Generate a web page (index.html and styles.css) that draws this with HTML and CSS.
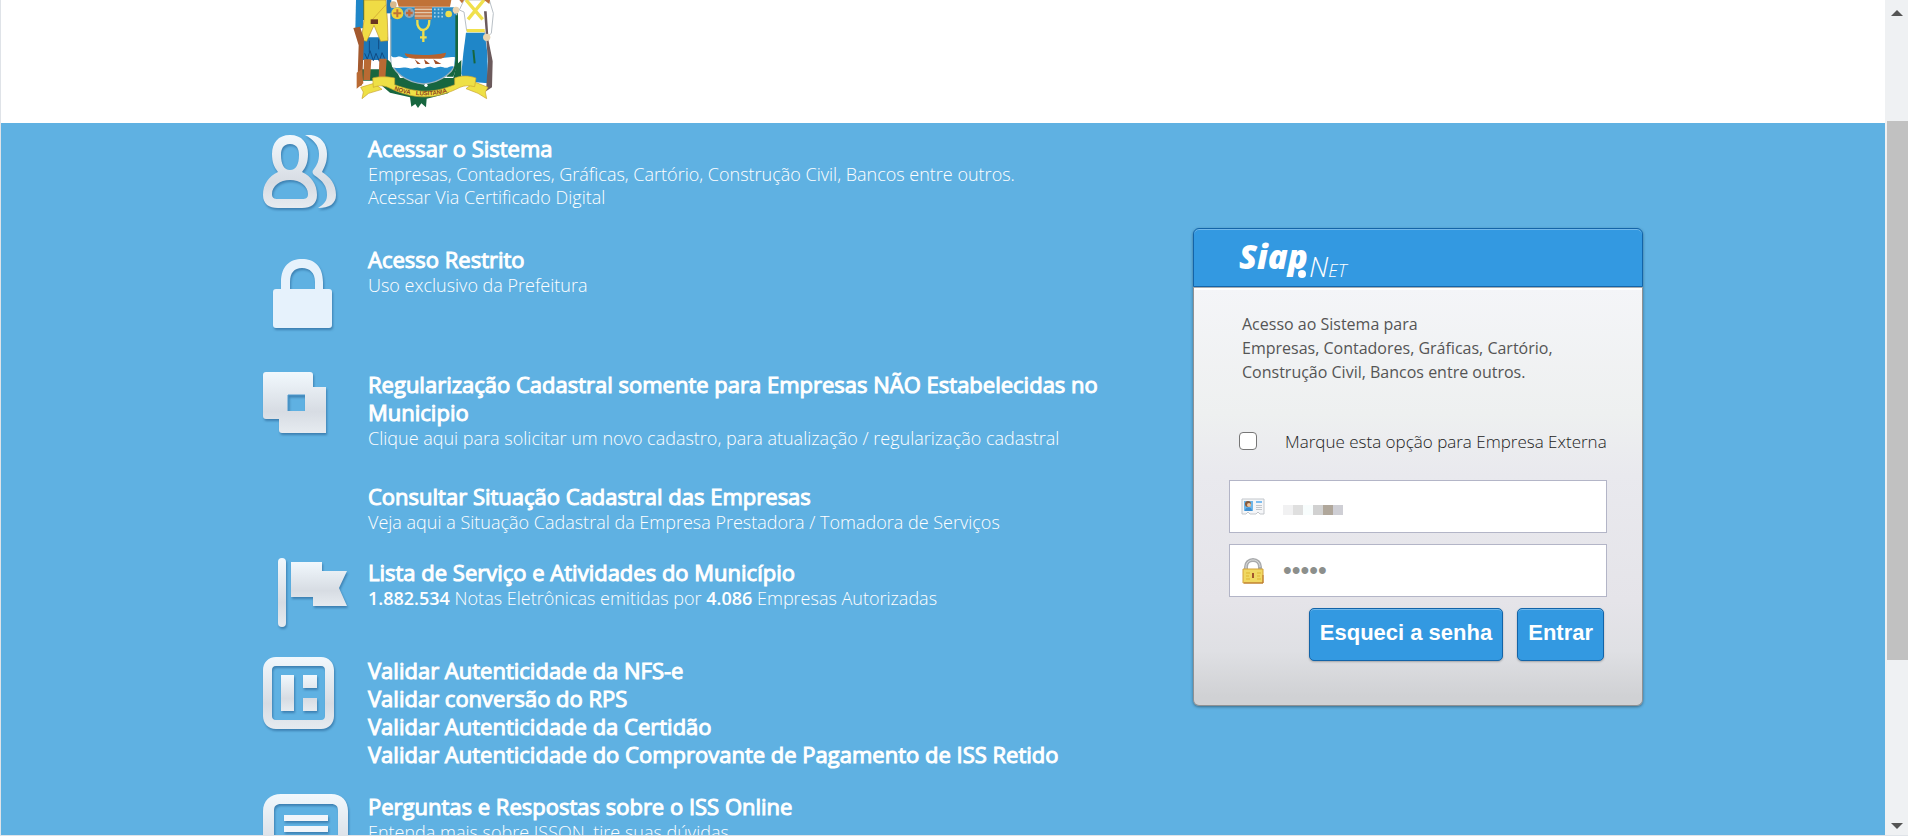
FILE: index.html
```html
<!DOCTYPE html>
<html lang="pt-br">
<head>
    <meta charset="UTF-8">
    <title>SiapNet - ISS Online</title>
    <link rel="stylesheet" href="styles.css">
</head>
<body>
    <div class="frame">
        <div class="page">
            <header class="topo">
                <div class="container">
                    <svg class="brasao" viewBox="0 0 600 369" role="img" aria-label="Brasão do município">
                        <!-- folhagem -->
                        <path fill="#17663f" d="M165 172l25 22 20 40h160l10-40 14-14v50l-40 50-46 12-18 4-2 26-14-12-10 14-8-12-12 8-4-28-60-14-40-34z"/>
                        <path fill="#17663f" d="M364 40h20v150l-14 40h-20zM98 0h10v60h-10zM96 208h100l10 34h-110z"/>
                        <!-- figura da esquerda -->
                        <path fill="#1f86c8" d="M78 0h22v84l-24 4z"/>
                        <path fill="#1d78b8" d="M98 112h76v68H96z"/>
                        <path stroke="#114c84" stroke-width="3" fill="none" d="M104 160l8 18 8-26 10 30 8-22 10 24 8-26 8 18M118 122v34M146 118v30"/>
                        <path fill="#f0dc45" stroke="#b98f2a" stroke-width="2" d="M102 0h66l4 60 2 62-22 2-20-48-22 48-16-4 8-60z"/>
                        <path stroke="#c99a2e" stroke-width="2" d="M168 14l-42 46"/>
                        <path fill="#6b3420" d="M122 58h22v14h-22z"/>
                        <path fill="#a3592e" d="M70 84l20-4 12 36-6 140-14 4 4-124z"/>
                        <path fill="#b96a33" d="M102 178h22l-4 62h-20zM148 176h22l-4 60h-20zM80 218l16-10 4 42-20 16z"/>
                        <path fill="#2176b4" d="M170 0h14v40h-14z"/>
                        <!-- escudo -->
                        <path fill="#258fcf" stroke="#9fb4bd" stroke-width="4" d="M182 40h198v130c0 48-50 78-99 82-49-4-99-34-99-82z"/>
                        <path fill="#17663f" d="M376 46h8v150l-20 26c8-16 12-30 12-48z"/>
                        <path fill="#fff" d="M183 168c12 10 22-4 34 4 14 8 22-6 36 2 12 4 20-6 34-2 14 8 24-4 38 0 16 6 32-4 50 0l-3 28c-12-6-18 8-32 2-14-6-22 6-34 0-14-6-22 8-36 2-14-6-20 6-34 0-14-6-32 6-50-4z"/>
                        <path fill="#b5622d" d="M224 160c36 8 88 6 124-2-2 14-10 18-20 18h-72c-18 0-30-6-32-16z"/>
                        <path fill="#a3512a" d="M254 178l18 14-10 0zM282 178l18 14-14 0zM310 178l24 14-18 0z"/>
                        <path fill="none" stroke="#eede4d" stroke-width="7" d="M262 60c-4 40 38 40 36 0M280 90v36M270 112h20"/>
                        <!-- coroa mural -->
                        <path fill="#c07238" d="M200 0h164l-4 20H206z"/>
                        <path fill="#2c8cc5" d="M182 22h190v36H182z"/>
                        <circle cx="202" cy="40" r="18" fill="#f0d23c"/>
                        <path stroke="#c07238" stroke-width="6" d="M202 28v24M190 40h24"/>
                        <circle cx="238" cy="39" r="15" fill="#93aab8"/>
                        <path stroke="#c0683a" stroke-width="7" d="M238 29v20M228 39h20"/>
                        <path fill="#c9804f" d="M254 20h52v38h-52z"/>
                        <path stroke="#e8d8c0" stroke-width="3" d="M254 28h52M254 38h52M254 48h52"/>
                        <path stroke="#a9d3ea" stroke-width="5" stroke-dasharray="5 6" d="M312 28h30M312 39h30M312 50h30"/>
                        <circle cx="356" cy="42" r="10" fill="#f0e04c"/>
                        <circle cx="190" cy="14" r="10" fill="#d9b98c"/>
                        <circle cx="378" cy="30" r="10" fill="#e8d3ae"/>
                        <!-- figura da direita -->
                        <path fill="#fff" stroke="#b9c0c6" stroke-width="3" d="M388 30l14-30h76l12 40-6 60-14 12-8-20h-52l-8-56z"/>
                        <path stroke="#f0e04c" stroke-width="10" d="M408 0l50 58M462 0l-48 58M410 92h54"/>
                        <path fill="#c07238" d="M388 0h14l-6 10zM462 0h18l-2 12z"/>
                        <path fill="#1f86c8" d="M408 98h56l8 60 2 92-72-6-8-24 6-60z"/>
                        <path stroke="#17663f" stroke-width="6" fill="none" d="M430 150l4 40"/>
                        <path fill="#6b5a5c" d="M462 34h8l6 90 12 60-2 78-18 12 6-90z"/>
                        <circle cx="470" cy="112" r="11" fill="#e8d3ae"/>
                        <!-- faixa -->
                        <path fill="#eee045" stroke="#c9a32e" stroke-width="2" d="M92 262l40-12 24 18-40 12-20 16 4-20zM474 262l-40-16-26 20 36 14 26 16-4-20z"/>
                        <path fill="#eee045" stroke="#c9a32e" stroke-width="2" d="M128 234c24-6 46-4 66 0v20c70 26 114 26 180 0v-20c22-8 42-8 64 0l-4 26c-18-4-30-4-44 2-74 38-140 38-216 0-16-6-28-6-44 0z"/>
                        <path id="curva" fill="none" d="M192 270c60 22 130 22 190-4"/>
                        <text class="lema"><textPath href="#curva">NOVA <tspan dx="12">LUSITANIA</tspan></textPath></text>
                        <circle cx="288" cy="256" r="5" fill="#fff"/>
                    </svg>
                </div>
            </header>

            <main class="conteudo">
                <div class="container colunas">
                    <svg class="defs" aria-hidden="true">
                        <defs>
                            <linearGradient id="prata" x1="0" y1="0" x2="0" y2="1">
                                <stop offset="0" stop-color="#f1f8fd"/>
                                <stop offset="0.65" stop-color="#d7dce3"/>
                                <stop offset="1" stop-color="#e6ebf0"/>
                            </linearGradient>
                        </defs>
                    </svg>

                    <div class="menu">
                        <section class="item item-acesso">
                            <div class="icone">
                                <svg width="73" height="75" viewBox="0 0 73 75">
                                    <path fill="url(#prata)" d="M42 0h6c10 1 16 9 16 19 0 8-2 12-5 18 8 5 14 12 14 23 0 9-7 13-18 13 6-4 9-7 9-13 0-9-4-14-13-20-2-2-2-4 0-6 3-4 5-8 5-15 0-9-6-15-14-19z"/>
                                    <path fill="url(#prata)" fill-rule="evenodd" d="M27 0c12 0 18 8 18 19 0 8-2 13-6 18 9 4 15 12 15 23 0 9-6 13-15 13H15C6 73 0 69 0 60c0-11 6-19 15-23-4-5-6-10-6-18C9 8 15 0 27 0zm0 9c-7 0-9 5-9 11 0 9 3 15 9 15s9-6 9-15c0-6-2-11-9-11zm0 36c-10 0-18 6-18 14 0 4 2 5 6 5h24c4 0 6-1 6-5 0-8-8-14-18-14z"/>
                                </svg>
                            </div>
                            <div class="texto">
                                <h2><a href="#">Acessar o Sistema</a></h2>
                                <p>Empresas, Contadores, Gráficas, Cartório, Construção Civil, Bancos entre outros.</p>
                                <p><a href="#">Acessar Via Certificado Digital</a></p>
                            </div>
                        </section>

                        <section class="item item-restrito">
                            <div class="icone icone-cadeado">
                                <svg width="61" height="71" viewBox="0 0 61 71">
                                    <path fill="#e6f2fc" fill-rule="evenodd" d="M9 31V24C9 8 18 1 30 1s21 7 21 23v7h6c2 0 3 1 3 3v33c0 2-1 3-3 3H4c-2 0-3-1-3-3V34c0-2 1-3 3-3zm9 0h25v-7c0-9-5-14-13-14s-12 5-12 14z"/>
                                </svg>
                            </div>
                            <div class="texto">
                                <h2><a href="#">Acesso Restrito</a></h2>
                                <p>Uso exclusivo da Prefeitura</p>
                            </div>
                        </section>

                        <section class="item item-cadastro">
                            <div class="icone">
                                <svg width="63" height="65" viewBox="0 0 63 65">
                                    <path fill="url(#prata)" fill-rule="evenodd" d="M3 1h44c2 0 3 1 3 3v12h13v46H19c-2 0-3-1-3-3V48H3c-2 0-3-1-3-3V4c0-2 1-3 3-3zm22 23v16h17V24z"/>
                                    <path fill="none" stroke="#4f9bd0" d="M25 40V24h17"/>
                                </svg>
                            </div>
                            <div class="texto">
                                <h2><a href="#">Regularização Cadastral somente para Empresas NÃO Estabelecidas no Municipio</a></h2>
                                <p>Clique aqui para solicitar um novo cadastro, para atualização / regularização cadastral</p>
                            </div>
                        </section>

                        <section class="item">
                            <div class="icone"></div>
                            <div class="texto">
                                <h2><a href="#">Consultar Situação Cadastral das Empresas</a></h2>
                                <p>Veja aqui a Situação Cadastral da Empresa Prestadora / Tomadora de Serviços</p>
                            </div>
                        </section>

                        <section class="item">
                            <div class="icone icone-bandeira">
                                <svg width="70" height="70" viewBox="0 0 70 70">
                                    <rect fill="url(#prata)" x="1" y="0" width="8" height="69" rx="4"/>
                                    <path fill="url(#prata)" d="M14 4h31v9h25l-8 17 8 18H36v-9H14z"/>
                                </svg>
                            </div>
                            <div class="texto">
                                <h2><a href="#">Lista de Serviço e Atividades do Município</a></h2>
                                <p><strong>1.882.534</strong> Notas Eletrônicas emitidas por <strong>4.086</strong> Empresas Autorizadas</p>
                            </div>
                        </section>

                        <section class="item">
                            <div class="icone">
                                <svg width="72" height="73" viewBox="0 0 72 73">
                                    <path fill="url(#prata)" fill-rule="evenodd" d="M13 0h45c8 0 13 6 13 13v46c0 7-5 13-13 13H13C5 72 0 66 0 59V13C0 6 5 0 13 0zm0 9c-3 0-4 2-4 4v46c0 2 1 4 4 4h45c3 0 4-2 4-4V13c0-2-1-4-4-4z"/>
                                    <path fill="url(#prata)" d="M18 18h13v36H18zM40 18h14v13H40zM40 41h14v13H40z"/>
                                </svg>
                            </div>
                            <div class="texto">
                                <h2><a href="#">Validar Autenticidade da NFS-e</a></h2>
                                <h2><a href="#">Validar conversão do RPS</a></h2>
                                <h2><a href="#">Validar Autenticidade da Certidão</a></h2>
                                <h2><a href="#">Validar Autenticidade do Comprovante de Pagamento de ISS Retido</a></h2>
                            </div>
                        </section>

                        <section class="item">
                            <div class="icone">
                                <svg width="86" height="86" viewBox="0 0 86 86">
                                    <path fill="url(#prata)" fill-rule="evenodd" d="M18 1h50c11 0 17 7 17 17v50c0 11-6 17-17 17H18C7 85 0 79 0 68V18C0 8 7 1 18 1zm0 10c-5 0-7 2-7 7v50c0 5 2 7 7 7h50c5 0 7-2 7-7V18c0-5-2-7-7-7z"/>
                                    <path fill="#f1f5fa" d="M21 22h44v6H21zM21 33h44v6H21zM21 44h44v6H21z"/>
                                </svg>
                            </div>
                            <div class="texto">
                                <h2><a href="#">Perguntas e Respostas sobre o ISS Online</a></h2>
                                <p>Entenda mais sobre ISSON, tire suas dúvidas</p>
                            </div>
                        </section>
                    </div>

                    <form class="login">
                        <div class="login-topo">
                            <svg width="110" height="48" viewBox="0 0 110 48" role="img" aria-label="SiapNet">
                                <text class="logo-siap" x="2" y="34">Siap</text>
                                <circle cx="65" cy="39" r="4" fill="#fff"/>
                                <text class="logo-net" x="72" y="42">N<tspan class="logo-et">ET</tspan></text>
                            </svg>
                        </div>
                        <div class="login-corpo">
                            <p class="login-texto">Acesso ao Sistema para<br>Empresas, Contadores, Gráficas, Cartório,<br>Construção Civil, Bancos entre outros.</p>

                            <div class="externa">
                                <input type="checkbox" id="externa">
                                <label for="externa">Marque esta opção para Empresa Externa</label>
                            </div>

                            <div class="campo">
                                <svg width="24" height="24" viewBox="0 0 24 24" aria-hidden="true">
                                    <path fill="#f5f6f8" stroke="#c3c7cc" d="M1 4h22v15h-4l-2-2-2 2H9l-2-2-2 2H1z"/>
                                    <path fill="#6fb7ea" d="M3 6h9v10H3z"/>
                                    <circle cx="7" cy="9" r="3" fill="#8a5a3a"/>
                                    <circle cx="8" cy="10" r="2" fill="#f1c7a0"/>
                                    <path fill="#3f8fd0" d="M4 16c0-5 7-5 7 0z"/>
                                    <path stroke="#7dbdf0" stroke-width="2" d="M15 7h6"/>
                                    <path stroke="#c3c7cc" d="M15 10.500h6M15 12.500h6M15 14.500h6"/>
                                </svg>
                                <input type="text" id="usuario" aria-label="Usuário">
                                <div class="mosaico">
                                    <i class="m1"></i><i class="m2"></i><i class="m3"></i><i class="m4"></i><i class="m5"></i><i class="m6"></i>
                                </div>
                            </div>

                            <div class="campo">
                                <svg width="24" height="26" viewBox="0 0 24 26" aria-hidden="true">
                                    <path fill="none" stroke="#a9abad" stroke-width="4" d="M5 12V9c0-4 3-7 7-7s7 3 7 7v3"/>
                                    <path fill="none" stroke="#dcdddd" d="M5 11V9c0-4 3-7 7-7s7 3 7 7"/>
                                    <path fill="#f0d862" stroke="#d3a13a" d="M2 11h20v14H2z"/>
                                    <path fill="none" stroke="#b8722c" d="M3 25h19V17"/>
                                    <path stroke="#dfb530" d="M5 15h4M5 18h3M5 21h4M16 15h4M16 18h3M16 21h4"/>
                                    <path stroke="#a3542c" stroke-width="2" d="M12 15v5"/>
                                </svg>
                                <input type="password" id="senha" aria-label="Senha" value="12345">
                            </div>

                            <div class="botoes">
                                <button type="button">Esqueci a senha</button>
                                <button type="submit">Entrar</button>
                            </div>
                        </div>
                    </form>
                </div>
            </main>
        </div>

        <div class="barra" aria-hidden="true">
            <div class="seta seta-cima"></div>
            <div class="trilho"><div class="polegar"></div></div>
            <div class="seta seta-baixo"></div>
        </div>
    </div>
</body>
</html>
```
FILE: styles.css
```css
* {
    box-sizing: border-box;
}

body {
    margin: 0;
    font-family: "Open Sans", "Noto Sans", sans-serif;
    font-size: 18px;
    line-height: 23px;
    color: #fff;
}

a {
    color: inherit;
    text-decoration: none;
}

/* janela com barra de rolagem */
.frame {
    display: flex;
    height: 100vh;
    overflow: hidden;
    border-left: 1px solid #dfe3e8;
    border-bottom: 1px solid #dfe3e8;
}

.page {
    flex: 1;
    min-width: 0;
    height: 100%;
    overflow: hidden;
    background-color: #5fb1e2;
}

.container {
    max-width: 1400px;
    margin: 0 auto;
    padding-left: 20px;
}

.topo {
    background-color: #fff;
}

.brasao {
    display: block;
    width: 200px;
    height: 123px;
    margin-left: 67px;
}

.lema {
    font-family: "Liberation Sans", sans-serif;
    font-size: 18px;
    font-weight: bold;
    fill: #8a3f1c;
}

.defs {
    position: absolute;
    width: 0;
    height: 0;
}

.colunas {
    display: flex;
    justify-content: space-between;
    align-items: flex-start;
    padding-top: 11px;
}

/* menu de serviços */
.menu {
    width: 850px;
}

.item {
    display: flex;
    padding-bottom: 24px;
}

.item-acesso {
    padding-bottom: 35px;
}

.item-restrito {
    padding-bottom: 41px;
}

.item-cadastro {
    padding-bottom: 32px;
}

.icone {
    flex: 0 0 105px;
    padding-top: 1px;
}

.icone svg {
    display: block;
    overflow: visible;
    filter: drop-shadow(1px 2px 1px rgba(20, 70, 120, 0.45));
}

.icone-cadeado {
    padding: 13px 0 0 9px;
}

.icone-bandeira {
    padding: 0 0 4px 14px;
}

.texto h2 {
    margin: 0;
    font-size: 22px;
    line-height: 28px;
    font-weight: 400;
    -webkit-text-stroke: 1px #fff;
}

.texto p {
    margin: 0;
    font-weight: 300;
}

.texto h2 + p {
    padding-top: 1px;
}

.texto strong {
    font-weight: 600;
}

/* caixa de login */
.login {
    width: 450px;
    margin-top: 94px;
    border-radius: 6px;
    box-shadow: 0 1px 3px rgba(0, 0, 0, 0.4);
}

.login-topo {
    height: 59px;
    padding: 6px 0 0 43px;
    border: 1px solid #1364a8;
    border-radius: 6px 6px 0 0;
    background-color: #3399e1;
    box-shadow: inset 0 1px 0 #72b9ec;
}

.login-topo svg {
    display: block;
    overflow: visible;
}

.logo-siap {
    font-family: "Open Sans", sans-serif;
    font-size: 33px;
    font-weight: 800;
    font-style: italic;
    fill: #fff;
}

.logo-net {
    font-family: "Open Sans", sans-serif;
    font-size: 28px;
    font-weight: 300;
    font-style: italic;
    fill: #fff;
}

.logo-et {
    font-size: 18px;
}

.login-corpo {
    padding: 24px 35px 44px;
    border: 1px solid #8f9193;
    border-top-color: #a9adb0;
    border-radius: 0 0 6px 6px;
    background: linear-gradient(#f4f5f8, #eef0f0 30%, #e9e9ee 45%, #e5e4e9 75%, #dfe0e4 87%, #d0d1d4 98%);
    box-shadow: inset 0 2px 0 #fff;
}

.login-texto {
    margin: 0 0 45px 13px;
    font-size: 16px;
    line-height: 24px;
    color: #555;
}

.externa {
    display: flex;
    align-items: center;
    height: 24px;
    margin-bottom: 27px;
    font-size: 17px;
    font-weight: 300;
    color: #222;
}

.externa input {
    appearance: none;
    width: 18px;
    height: 18px;
    margin: 0 28px 0 10px;
    border: 1px solid #767676;
    border-radius: 4px;
    background-color: #fff;
}

.campo {
    position: relative;
    display: flex;
    align-items: center;
    height: 53px;
    margin-bottom: 11px;
    padding-left: 11px;
    border: 1px solid #b3b5c7;
    background-color: #fff;
}

.campo input {
    flex: 1;
    min-width: 0;
    height: 100%;
    padding: 0 18px;
    border: 0;
    outline: 0;
    background: none;
    font-family: "Liberation Sans", sans-serif;
    font-size: 25px;
    color: #8c8f8c;
}

.mosaico {
    position: absolute;
    left: 53px;
    top: 24px;
    display: flex;
}

.mosaico i {
    width: 10px;
    height: 10px;
}

.m1 { background-color: #f1f1f2; }
.m2 { background-color: #dfdfdf; }
.m3 { background-color: #f8fdfd; }
.m4 { background-color: #d1d1d1; }
.m5 { background-color: #b0a79b; }
.m6 { background-color: #cfcfd5; }

.botoes {
    display: flex;
    justify-content: flex-end;
    gap: 14px;
    padding-right: 3px;
}

.botoes button {
    height: 53px;
    padding: 0 10px 3px;
    border: 1px solid #1364a8;
    border-radius: 5px;
    background-color: #3399e1;
    box-shadow: inset 0 1px 0 #72b9ec, 0 1px 2px rgba(0, 0, 0, 0.25);
    font-family: "Liberation Sans", Arial, sans-serif;
    font-size: 22px;
    font-weight: bold;
    color: #fff;
    cursor: pointer;
}

/* barra de rolagem */
.barra {
    display: flex;
    flex-direction: column;
    align-items: center;
    width: 23px;
    padding: 10px 0 6px;
    background-color: #eff1f3;
}

.seta {
    width: 0;
    height: 0;
    border: 6px solid transparent;
}

.seta-cima {
    border-top: 0;
    border-bottom-color: #555;
}

.seta-baixo {
    border-bottom: 0;
    border-top-color: #555;
}

.trilho {
    flex: 1;
    align-self: stretch;
    padding: 105px 0 163px 2px;
}

.polegar {
    height: 100%;
    background-color: #c1c1c1;
}
```
